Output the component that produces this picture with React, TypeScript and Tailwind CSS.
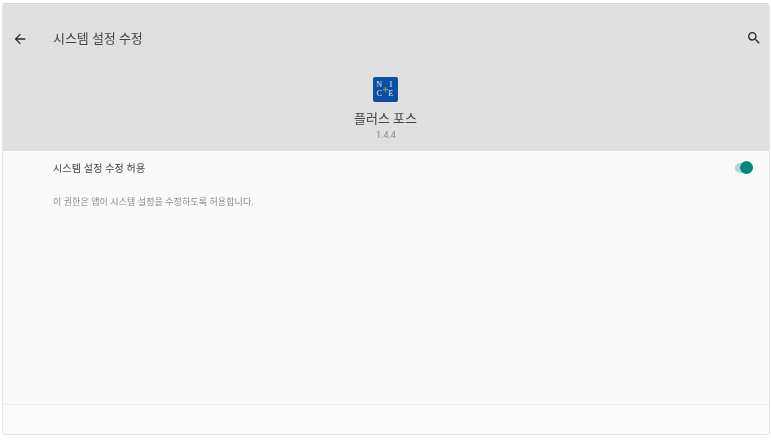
function NiceLogo() {
  return (
    <div className="relative grid h-[25px] w-[25px] grid-cols-2 grid-rows-2 rounded-[2px] bg-[#0b4ea2] px-[1px] py-[3px] text-[8px] leading-none text-[#e4ebf7] [font-family:'Liberation_Serif',serif]">
      <span className="flex items-center justify-center">N</span>
      <span className="flex items-center justify-center">I</span>
      <span className="flex items-center justify-center">C</span>
      <span className="flex items-center justify-center">E</span>
      <span className="absolute left-[12px] top-[10px] h-[5px] w-px bg-[#a8935f]" />
      <span className="absolute left-[10px] top-[12px] h-px w-[5px] bg-[#a8935f]" />
    </div>
  );
}

export default function App() {
  return (
    <div className="h-[440px] w-[771px] overflow-hidden bg-white px-[2px] pb-[4px] pt-[3px] [font-family:Roboto,'Noto_Sans_CJK_KR',sans-serif]">
      <div className="flex h-[432px] w-[768px] flex-col overflow-hidden rounded-[4px] border border-[#e4e4e4] border-t-[#d4d4d4] bg-[#fafafa]">
        <header className="h-[147px] shrink-0 bg-[#e0e0e0]">
          <div className="flex h-[70px] items-center pl-[9px] pr-[7px]">
            <svg width="16" height="16" viewBox="0 0 24 24" className="fill-[#2a2a2a]">
              <path d="M20 11H7.83l5.59-5.59L12 4l-8 8 8 8 1.41-1.41L7.83 13H20v-2z" />
            </svg>
            <h1 className="ml-[25px] text-[13px] tracking-[-0.05px] text-[#444444] will-change-transform">시스템 설정 수정</h1>
            <svg width="16" height="16" viewBox="0 0 24 24" className="ml-auto -translate-y-px fill-[#2a2a2a]">
              <path d="M15.5 14h-.79l-.28-.27A6.471 6.471 0 0 0 16 9.5 6.5 6.5 0 1 0 9.5 16c1.61 0 3.09-.59 4.23-1.57l.27.28v.79l5 4.99L20.49 19l-4.99-5zm-6 0C7.01 14 5 11.99 5 9.5S7.01 5 9.5 5 14 7.01 14 9.5 11.99 14 9.5 14z" />
            </svg>
          </div>
          <div className="flex flex-col items-center">
            <div className="mt-[3px] -translate-x-px">
              <NiceLogo />
            </div>
            <div className="mt-[8px] text-[13px] leading-[18px] text-[#444444] will-change-transform">플러스 포스</div>
            <div className="mt-[1px] text-[9px] leading-[12px] text-[#8a8a8a] will-change-transform">1.4.4</div>
          </div>
        </header>
        <main className="flex-1 pl-[50px] pr-[16px]">
          <div className="flex h-[34px] items-center justify-between">
            <span className="text-[10px] tracking-[0.17px] text-[#444444] will-change-transform">시스템 설정 수정 허용</span>
            <div className="relative h-[10px] w-[18px] rounded-full bg-[#b2d8d3]">
              <span className="absolute right-0 top-[-2px] h-[13px] w-[13px] rounded-full bg-[#00897b]" />
            </div>
          </div>
          <p className="mt-[11px] text-[9px] leading-[12px] tracking-[0.1px] text-[#8a8a8a] will-change-transform">
            이 권한은 앱이 시스템 설정을 수정하도록 허용합니다.
          </p>
        </main>
        <footer className="h-[30px] shrink-0 border-t border-[#eeeeee] bg-[#fcfcfc]" />
      </div>
    </div>
  );
}
